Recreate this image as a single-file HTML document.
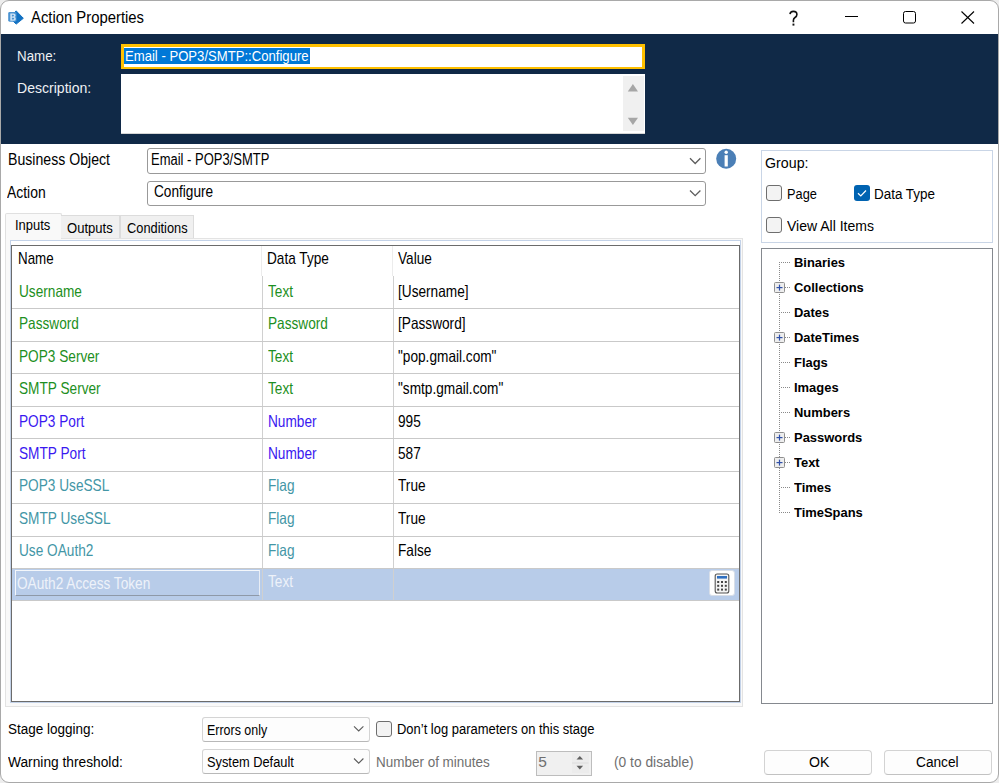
<!DOCTYPE html>
<html><head><meta charset="utf-8">
<style>*{margin:0;padding:0;box-sizing:border-box}
html,body{width:999px;height:783px;overflow:hidden;background:#ededed}
body{position:relative;font-family:"Liberation Sans",sans-serif;color:#000}
.a{position:absolute}
.t{position:absolute;white-space:pre;line-height:1;font-size:13px;transform-origin:0 0}
#win{position:absolute;left:0;top:0;width:999px;height:783px;background:#fff;border:1px solid #a9a9a9;border-radius:9px}
.g{color:#1d8f22}
.b{color:#3a18f0}
.f{color:#4396a6}
.tree{font-weight:bold}
</style></head><body>
<div id="win"></div>
<svg class="a" style="left:0;top:0" width="999" height="34">
<path d="M16.2 10.9 L23.3 18.3 L16.2 24.1 L9.4 17.6 Z" fill="#1271c2" stroke="#1271c2" stroke-width="1" stroke-linejoin="round"/>
<rect x="8.2" y="12.1" width="8.3" height="9.6" rx="1.4" fill="#4a93d2"/>
<path d="M10.3 13.4 H13.6 Q15.6 13.4 15.6 15.3 Q15.6 16.8 14.4 17 Q15.8 17.3 15.8 18.9 Q15.8 20.8 13.7 20.8 H10.3 Z M11.9 14.8 V16.4 H13.1 Q14 16.4 14 15.6 Q14 14.8 13.1 14.8 Z M11.9 17.7 V19.4 H13.2 Q14.2 19.4 14.2 18.55 Q14.2 17.7 13.2 17.7 Z" fill="#cfe3f5" fill-rule="evenodd"/>
<path d="M790 14.2 Q790.3 11.4 793.3 11.4 Q796.9 11.4 796.9 14.5 Q796.9 16.3 795 17.5 Q793.4 18.5 793.4 20.3 V22.3" fill="none" stroke="#111" stroke-width="1.6"/>
<rect x="792.5" y="23.6" width="1.9" height="2" fill="#111"/>
<line x1="845" y1="16.5" x2="858" y2="16.5" stroke="#000" stroke-width="1"/>
<rect x="903.5" y="11.5" width="12" height="11.5" rx="2" fill="none" stroke="#000" stroke-width="1"/>
<line x1="961.5" y1="11.5" x2="974" y2="23.5" stroke="#000" stroke-width="1.1"/>
<line x1="974" y1="11.5" x2="961.5" y2="23.5" stroke="#000" stroke-width="1.1"/>
</svg>
<div class="t " style="left:31.2px;top:9.56px;font-size:16px;color:#000;transform:scaleX(0.9274);">Action Properties</div>
<div class="a" style="left:1px;top:34px;width:997px;height:109.5px;background:#102947"></div>
<div class="t " style="left:16.9px;top:49.14px;font-size:14.6px;color:#eef0f3;transform:scaleX(0.9143);">Name:</div>
<div class="t " style="left:16.9px;top:80.54px;font-size:14.6px;color:#eef0f3;transform:scaleX(0.9629);">Description:</div>
<div class="a" style="left:121px;top:44px;width:524px;height:25px;background:#fff;border:3px solid #ffc000;border-bottom-width:2.5px"></div>
<div class="a" style="left:124px;top:47.5px;width:186px;height:16.5px;background:#0078d7"></div>
<div class="t " style="left:125px;top:48.57px;font-size:14.8px;color:#fff;transform:scaleX(0.8860);">Email - POP3/SMTP::Configure</div>
<div class="a" style="left:120.5px;top:74px;width:524.5px;height:59.5px;background:#fff;border-bottom:1px solid #d6d6d6"></div>
<div class="a" style="left:623px;top:76px;width:21px;height:55px;background:#f0f0f0"></div>
<svg class="a" style="left:620px;top:80px" width="30" height="50">
<path d="M7.8 11.4 L12.9 4 L18 11.4 Z" fill="#a6a6a6"/>
<path d="M7.8 37.8 L18 37.8 L12.9 45.1 Z" fill="#a6a6a6"/>
</svg>
<div class="t " style="left:7.7px;top:151.33px;font-size:16.5px;color:#000;transform:scaleX(0.8555);">Business Object</div>
<div class="t " style="left:7.2px;top:183.53px;font-size:16.5px;color:#000;transform:scaleX(0.8439);">Action</div>
<div class="a" style="left:147px;top:148px;width:559px;height:25.5px;background:#fff;border:1.5px solid #999;border-radius:3px"></div>
<div class="t " style="left:151.3px;top:151.93px;font-size:15.8px;color:#000;transform:scaleX(0.8217);">Email - POP3/SMTP</div>
<div class="a" style="left:147px;top:180.5px;width:559px;height:25.5px;background:#fff;border:1.5px solid #999;border-radius:3px"></div>
<div class="t " style="left:153.5px;top:184.13px;font-size:15.8px;color:#000;transform:scaleX(0.8642);">Configure</div>
<svg class="a" style="left:680px;top:140px" width="70" height="75">
<polyline points="10,18.3 15.2,23.5 20.4,18.3" fill="none" stroke="#5c5c5c" stroke-width="1.3"/>
<polyline points="10,50.5 15.2,55.7 20.4,50.5" fill="none" stroke="#5c5c5c" stroke-width="1.3"/>
<circle cx="46.2" cy="18.7" r="10" fill="#4b7fb6"/>
<circle cx="46.2" cy="12.2" r="1.7" fill="#fff"/>
<rect x="44.6" y="15.2" width="3.2" height="11.3" fill="#fff"/>
</svg>
<div class="a" style="left:5px;top:238px;width:738px;height:469px;background:#f9f9f9;border:1px solid #e3e3e3"></div>
<div class="a" style="left:5px;top:212.5px;width:56.5px;height:26.5px;background:#f9f9f9;border:1px solid #e0e0e0;border-bottom:none;border-radius:2px 2px 0 0"></div>
<div class="a" style="left:61px;top:215px;width:58.5px;height:23px;background:#f0f0f0;border:1px solid #dcdcdc;border-bottom:none;border-left:none"></div>
<div class="a" style="left:119.5px;top:215px;width:74px;height:23px;background:#f0f0f0;border:1px solid #dcdcdc;border-bottom:none"></div>
<div class="t " style="left:14.7px;top:217.00px;font-size:15px;color:#000;transform:scaleX(0.8636);">Inputs</div>
<div class="t " style="left:66.5px;top:219.70px;font-size:15px;color:#000;transform:scaleX(0.8700);">Outputs</div>
<div class="t " style="left:127.4px;top:219.70px;font-size:15px;color:#000;transform:scaleX(0.8548);">Conditions</div>
<div class="a" style="left:10px;top:240px;width:731px;height:463px;background:#fff;border:1px solid #c3d2e8"></div>
<div class="a" style="left:11px;top:245px;width:729px;height:457px;background:#fff;border:1px solid #6b6b6b"></div>
<div class="t " style="left:17.8px;top:249.62px;font-size:16.4px;color:#000;transform:scaleX(0.8140);">Name</div>
<div class="t " style="left:267px;top:249.62px;font-size:16.4px;color:#000;transform:scaleX(0.8323);">Data Type</div>
<div class="t " style="left:397.5px;top:249.62px;font-size:16.4px;color:#000;transform:scaleX(0.8323);">Value</div>
<div class="a" style="left:261px;top:246px;width:1px;height:30px;background:#ececec"></div>
<div class="a" style="left:391.5px;top:246px;width:1px;height:30px;background:#ececec"></div>
<div class="a" style="left:12px;top:568px;width:727px;height:32px;background:#b8cce9"></div>
<div class="a" style="left:262px;top:276px;width:1px;height:324px;background:#d0d0d0"></div>
<div class="a" style="left:392.5px;top:276px;width:1px;height:324px;background:#d0d0d0"></div>
<div class="a" style="left:12px;top:308px;width:727px;height:1.2px;background:#c9c9c9"></div>
<div class="a" style="left:12px;top:341px;width:727px;height:1.2px;background:#c9c9c9"></div>
<div class="a" style="left:12px;top:373px;width:727px;height:1.2px;background:#c9c9c9"></div>
<div class="a" style="left:12px;top:406px;width:727px;height:1.2px;background:#c9c9c9"></div>
<div class="a" style="left:12px;top:438px;width:727px;height:1.2px;background:#c9c9c9"></div>
<div class="a" style="left:12px;top:471px;width:727px;height:1.2px;background:#c9c9c9"></div>
<div class="a" style="left:12px;top:503px;width:727px;height:1.2px;background:#c9c9c9"></div>
<div class="a" style="left:12px;top:535.5px;width:727px;height:1.2px;background:#c9c9c9"></div>
<div class="a" style="left:12px;top:568px;width:727px;height:1.2px;background:#c9c9c9"></div>
<div class="a" style="left:12px;top:600px;width:727px;height:1.2px;background:#c9c9c9"></div>
<div class="t g" style="left:19px;top:282.93px;font-size:16.5px;transform:scaleX(0.8273);">Username</div>
<div class="t g" style="left:268px;top:282.93px;font-size:16.5px;transform:scaleX(0.8273);">Text</div>
<div class="t " style="left:398px;top:282.93px;font-size:16.5px;color:#000;transform:scaleX(0.8273);">[Username]</div>
<div class="t g" style="left:19px;top:315.33px;font-size:16.5px;transform:scaleX(0.8273);">Password</div>
<div class="t g" style="left:268px;top:315.33px;font-size:16.5px;transform:scaleX(0.8273);">Password</div>
<div class="t " style="left:398px;top:315.33px;font-size:16.5px;color:#000;transform:scaleX(0.8273);">[Password]</div>
<div class="t g" style="left:19px;top:347.73px;font-size:16.5px;transform:scaleX(0.8273);">POP3 Server</div>
<div class="t g" style="left:268px;top:347.73px;font-size:16.5px;transform:scaleX(0.8273);">Text</div>
<div class="t " style="left:398px;top:347.73px;font-size:16.5px;color:#000;transform:scaleX(0.8273);">"pop.gmail.com"</div>
<div class="t g" style="left:19px;top:380.13px;font-size:16.5px;transform:scaleX(0.8273);">SMTP Server</div>
<div class="t g" style="left:268px;top:380.13px;font-size:16.5px;transform:scaleX(0.8273);">Text</div>
<div class="t " style="left:398px;top:380.13px;font-size:16.5px;color:#000;transform:scaleX(0.8273);">"smtp.gmail.com"</div>
<div class="t b" style="left:19px;top:412.53px;font-size:16.5px;transform:scaleX(0.8273);">POP3 Port</div>
<div class="t b" style="left:268px;top:412.53px;font-size:16.5px;transform:scaleX(0.8273);">Number</div>
<div class="t " style="left:398px;top:412.53px;font-size:16.5px;color:#000;transform:scaleX(0.8273);">995</div>
<div class="t b" style="left:19px;top:444.93px;font-size:16.5px;transform:scaleX(0.8273);">SMTP Port</div>
<div class="t b" style="left:268px;top:444.93px;font-size:16.5px;transform:scaleX(0.8273);">Number</div>
<div class="t " style="left:398px;top:444.93px;font-size:16.5px;color:#000;transform:scaleX(0.8273);">587</div>
<div class="t f" style="left:19px;top:477.33px;font-size:16.5px;transform:scaleX(0.8273);">POP3 UseSSL</div>
<div class="t f" style="left:268px;top:477.33px;font-size:16.5px;transform:scaleX(0.8273);">Flag</div>
<div class="t " style="left:398px;top:477.33px;font-size:16.5px;color:#000;transform:scaleX(0.8273);">True</div>
<div class="t f" style="left:19px;top:509.73px;font-size:16.5px;transform:scaleX(0.8273);">SMTP UseSSL</div>
<div class="t f" style="left:268px;top:509.73px;font-size:16.5px;transform:scaleX(0.8273);">Flag</div>
<div class="t " style="left:398px;top:509.73px;font-size:16.5px;color:#000;transform:scaleX(0.8273);">True</div>
<div class="t f" style="left:19px;top:542.13px;font-size:16.5px;transform:scaleX(0.8273);">Use OAuth2</div>
<div class="t f" style="left:268px;top:542.13px;font-size:16.5px;transform:scaleX(0.8273);">Flag</div>
<div class="t " style="left:398px;top:542.13px;font-size:16.5px;color:#000;transform:scaleX(0.8273);">False</div>
<div class="a" style="left:14.5px;top:569.5px;width:245px;height:26px;background:#b8cce9;border:1.5px solid #f4f7fb;border-bottom-color:#8e99a8;border-right-color:#e8edf5"></div>
<div class="t " style="left:16.5px;top:574.53px;font-size:16.5px;color:#eef2f9;transform:scaleX(0.8273);">OAuth2 Access Token</div>
<div class="t " style="left:268px;top:572.83px;font-size:16.5px;color:#eef2f9;transform:scaleX(0.8273);">Text</div>
<div class="a" style="left:709.3px;top:570px;width:25.3px;height:26px;background:#fff;border:1px solid #d8dee8;border-radius:3px"></div>
<svg class="a" style="left:714px;top:573px" width="17" height="21">
<rect x="1.2" y="1" width="13.6" height="19" rx="2" fill="#f4f4f4" stroke="#555" stroke-width="1.1"/>
<rect x="3" y="3" width="10" height="2.6" fill="#2f6fc0"/>
<g fill="#444">
<rect x="3.2" y="8" width="2" height="2"/><rect x="7" y="8" width="2" height="2"/><rect x="10.8" y="8" width="2" height="2"/>
<rect x="3.2" y="11.8" width="2" height="2"/><rect x="7" y="11.8" width="2" height="2"/><rect x="10.8" y="11.8" width="2" height="2"/>
<rect x="3.2" y="15.6" width="2" height="2"/><rect x="7" y="15.6" width="2" height="2"/><rect x="10.8" y="15.6" width="2" height="2"/>
</g></svg>
<div class="a" style="left:760.5px;top:149.5px;width:232.5px;height:93.5px;border:1px solid #c9d5e6"></div>
<div class="t " style="left:764.9px;top:155.65px;font-size:14px;color:#000;transform:scaleX(1.0161);">Group:</div>
<div class="a" style="left:766px;top:185px;width:16px;height:16px;background:#f3f3f3;border:1px solid #6e6e6e;border-radius:3px"></div>
<div class="t " style="left:786.9px;top:187.05px;font-size:14px;color:#000;transform:scaleX(0.9143);">Page</div>
<div class="a" style="left:853.5px;top:185px;width:16px;height:16px;background:#0063b1;border-radius:3px"></div>
<svg class="a" style="left:853.5px;top:185px" width="16" height="16"><polyline points="4,8.3 6.8,11 12,5.5" fill="none" stroke="#fff" stroke-width="1.2"/></svg>
<div class="t " style="left:874px;top:187.05px;font-size:14px;color:#000;transform:scaleX(0.9597);">Data Type</div>
<div class="a" style="left:766px;top:217.3px;width:16px;height:16px;background:#f3f3f3;border:1px solid #6e6e6e;border-radius:3px"></div>
<div class="t " style="left:787px;top:219.45px;font-size:14px;color:#000;transform:scaleX(1.0013);">View All Items</div>
<div class="a" style="left:760.5px;top:248px;width:232.5px;height:456px;background:#fff;border:1px solid #85898f"></div>
<svg class="a" style="left:760px;top:248px" width="40" height="280"><rect x="19" y="14" width="1" height="1" fill="#8a8a8a"/><rect x="19" y="16" width="1" height="1" fill="#8a8a8a"/><rect x="19" y="18" width="1" height="1" fill="#8a8a8a"/><rect x="19" y="20" width="1" height="1" fill="#8a8a8a"/><rect x="19" y="22" width="1" height="1" fill="#8a8a8a"/><rect x="19" y="24" width="1" height="1" fill="#8a8a8a"/><rect x="19" y="26" width="1" height="1" fill="#8a8a8a"/><rect x="19" y="28" width="1" height="1" fill="#8a8a8a"/><rect x="19" y="30" width="1" height="1" fill="#8a8a8a"/><rect x="19" y="32" width="1" height="1" fill="#8a8a8a"/><rect x="19" y="34" width="1" height="1" fill="#8a8a8a"/><rect x="19" y="36" width="1" height="1" fill="#8a8a8a"/><rect x="19" y="38" width="1" height="1" fill="#8a8a8a"/><rect x="19" y="40" width="1" height="1" fill="#8a8a8a"/><rect x="19" y="42" width="1" height="1" fill="#8a8a8a"/><rect x="19" y="44" width="1" height="1" fill="#8a8a8a"/><rect x="19" y="46" width="1" height="1" fill="#8a8a8a"/><rect x="19" y="48" width="1" height="1" fill="#8a8a8a"/><rect x="19" y="50" width="1" height="1" fill="#8a8a8a"/><rect x="19" y="52" width="1" height="1" fill="#8a8a8a"/><rect x="19" y="54" width="1" height="1" fill="#8a8a8a"/><rect x="19" y="56" width="1" height="1" fill="#8a8a8a"/><rect x="19" y="58" width="1" height="1" fill="#8a8a8a"/><rect x="19" y="60" width="1" height="1" fill="#8a8a8a"/><rect x="19" y="62" width="1" height="1" fill="#8a8a8a"/><rect x="19" y="64" width="1" height="1" fill="#8a8a8a"/><rect x="19" y="66" width="1" height="1" fill="#8a8a8a"/><rect x="19" y="68" width="1" height="1" fill="#8a8a8a"/><rect x="19" y="70" width="1" height="1" fill="#8a8a8a"/><rect x="19" y="72" width="1" height="1" fill="#8a8a8a"/><rect x="19" y="74" width="1" height="1" fill="#8a8a8a"/><rect x="19" y="76" width="1" height="1" fill="#8a8a8a"/><rect x="19" y="78" width="1" height="1" fill="#8a8a8a"/><rect x="19" y="80" width="1" height="1" fill="#8a8a8a"/><rect x="19" y="82" width="1" height="1" fill="#8a8a8a"/><rect x="19" y="84" width="1" height="1" fill="#8a8a8a"/><rect x="19" y="86" width="1" height="1" fill="#8a8a8a"/><rect x="19" y="88" width="1" height="1" fill="#8a8a8a"/><rect x="19" y="90" width="1" height="1" fill="#8a8a8a"/><rect x="19" y="92" width="1" height="1" fill="#8a8a8a"/><rect x="19" y="94" width="1" height="1" fill="#8a8a8a"/><rect x="19" y="96" width="1" height="1" fill="#8a8a8a"/><rect x="19" y="98" width="1" height="1" fill="#8a8a8a"/><rect x="19" y="100" width="1" height="1" fill="#8a8a8a"/><rect x="19" y="102" width="1" height="1" fill="#8a8a8a"/><rect x="19" y="104" width="1" height="1" fill="#8a8a8a"/><rect x="19" y="106" width="1" height="1" fill="#8a8a8a"/><rect x="19" y="108" width="1" height="1" fill="#8a8a8a"/><rect x="19" y="110" width="1" height="1" fill="#8a8a8a"/><rect x="19" y="112" width="1" height="1" fill="#8a8a8a"/><rect x="19" y="114" width="1" height="1" fill="#8a8a8a"/><rect x="19" y="116" width="1" height="1" fill="#8a8a8a"/><rect x="19" y="118" width="1" height="1" fill="#8a8a8a"/><rect x="19" y="120" width="1" height="1" fill="#8a8a8a"/><rect x="19" y="122" width="1" height="1" fill="#8a8a8a"/><rect x="19" y="124" width="1" height="1" fill="#8a8a8a"/><rect x="19" y="126" width="1" height="1" fill="#8a8a8a"/><rect x="19" y="128" width="1" height="1" fill="#8a8a8a"/><rect x="19" y="130" width="1" height="1" fill="#8a8a8a"/><rect x="19" y="132" width="1" height="1" fill="#8a8a8a"/><rect x="19" y="134" width="1" height="1" fill="#8a8a8a"/><rect x="19" y="136" width="1" height="1" fill="#8a8a8a"/><rect x="19" y="138" width="1" height="1" fill="#8a8a8a"/><rect x="19" y="140" width="1" height="1" fill="#8a8a8a"/><rect x="19" y="142" width="1" height="1" fill="#8a8a8a"/><rect x="19" y="144" width="1" height="1" fill="#8a8a8a"/><rect x="19" y="146" width="1" height="1" fill="#8a8a8a"/><rect x="19" y="148" width="1" height="1" fill="#8a8a8a"/><rect x="19" y="150" width="1" height="1" fill="#8a8a8a"/><rect x="19" y="152" width="1" height="1" fill="#8a8a8a"/><rect x="19" y="154" width="1" height="1" fill="#8a8a8a"/><rect x="19" y="156" width="1" height="1" fill="#8a8a8a"/><rect x="19" y="158" width="1" height="1" fill="#8a8a8a"/><rect x="19" y="160" width="1" height="1" fill="#8a8a8a"/><rect x="19" y="162" width="1" height="1" fill="#8a8a8a"/><rect x="19" y="164" width="1" height="1" fill="#8a8a8a"/><rect x="19" y="166" width="1" height="1" fill="#8a8a8a"/><rect x="19" y="168" width="1" height="1" fill="#8a8a8a"/><rect x="19" y="170" width="1" height="1" fill="#8a8a8a"/><rect x="19" y="172" width="1" height="1" fill="#8a8a8a"/><rect x="19" y="174" width="1" height="1" fill="#8a8a8a"/><rect x="19" y="176" width="1" height="1" fill="#8a8a8a"/><rect x="19" y="178" width="1" height="1" fill="#8a8a8a"/><rect x="19" y="180" width="1" height="1" fill="#8a8a8a"/><rect x="19" y="182" width="1" height="1" fill="#8a8a8a"/><rect x="19" y="184" width="1" height="1" fill="#8a8a8a"/><rect x="19" y="186" width="1" height="1" fill="#8a8a8a"/><rect x="19" y="188" width="1" height="1" fill="#8a8a8a"/><rect x="19" y="190" width="1" height="1" fill="#8a8a8a"/><rect x="19" y="192" width="1" height="1" fill="#8a8a8a"/><rect x="19" y="194" width="1" height="1" fill="#8a8a8a"/><rect x="19" y="196" width="1" height="1" fill="#8a8a8a"/><rect x="19" y="198" width="1" height="1" fill="#8a8a8a"/><rect x="19" y="200" width="1" height="1" fill="#8a8a8a"/><rect x="19" y="202" width="1" height="1" fill="#8a8a8a"/><rect x="19" y="204" width="1" height="1" fill="#8a8a8a"/><rect x="19" y="206" width="1" height="1" fill="#8a8a8a"/><rect x="19" y="208" width="1" height="1" fill="#8a8a8a"/><rect x="19" y="210" width="1" height="1" fill="#8a8a8a"/><rect x="19" y="212" width="1" height="1" fill="#8a8a8a"/><rect x="19" y="214" width="1" height="1" fill="#8a8a8a"/><rect x="19" y="216" width="1" height="1" fill="#8a8a8a"/><rect x="19" y="218" width="1" height="1" fill="#8a8a8a"/><rect x="19" y="220" width="1" height="1" fill="#8a8a8a"/><rect x="19" y="222" width="1" height="1" fill="#8a8a8a"/><rect x="19" y="224" width="1" height="1" fill="#8a8a8a"/><rect x="19" y="226" width="1" height="1" fill="#8a8a8a"/><rect x="19" y="228" width="1" height="1" fill="#8a8a8a"/><rect x="19" y="230" width="1" height="1" fill="#8a8a8a"/><rect x="19" y="232" width="1" height="1" fill="#8a8a8a"/><rect x="19" y="234" width="1" height="1" fill="#8a8a8a"/><rect x="19" y="236" width="1" height="1" fill="#8a8a8a"/><rect x="19" y="238" width="1" height="1" fill="#8a8a8a"/><rect x="19" y="240" width="1" height="1" fill="#8a8a8a"/><rect x="19" y="242" width="1" height="1" fill="#8a8a8a"/><rect x="19" y="244" width="1" height="1" fill="#8a8a8a"/><rect x="19" y="246" width="1" height="1" fill="#8a8a8a"/><rect x="19" y="248" width="1" height="1" fill="#8a8a8a"/><rect x="19" y="250" width="1" height="1" fill="#8a8a8a"/><rect x="19" y="252" width="1" height="1" fill="#8a8a8a"/><rect x="19" y="254" width="1" height="1" fill="#8a8a8a"/><rect x="19" y="256" width="1" height="1" fill="#8a8a8a"/><rect x="19" y="258" width="1" height="1" fill="#8a8a8a"/><rect x="19" y="260" width="1" height="1" fill="#8a8a8a"/><rect x="19" y="262" width="1" height="1" fill="#8a8a8a"/><rect x="19" y="264" width="1" height="1" fill="#8a8a8a"/><rect x="21" y="14" width="1" height="1" fill="#8a8a8a"/><rect x="23" y="14" width="1" height="1" fill="#8a8a8a"/><rect x="25" y="14" width="1" height="1" fill="#8a8a8a"/><rect x="27" y="14" width="1" height="1" fill="#8a8a8a"/><rect x="29" y="14" width="1" height="1" fill="#8a8a8a"/><rect x="21" y="39" width="1" height="1" fill="#8a8a8a"/><rect x="23" y="39" width="1" height="1" fill="#8a8a8a"/><rect x="25" y="39" width="1" height="1" fill="#8a8a8a"/><rect x="27" y="39" width="1" height="1" fill="#8a8a8a"/><rect x="29" y="39" width="1" height="1" fill="#8a8a8a"/><rect x="14.5" y="34.5" width="10" height="10" rx="1" fill="#eeeeee" stroke="#8f8f8f" stroke-width="1"/><rect x="16.5" y="39" width="6" height="1.2" fill="#2f4fa8"/><rect x="18.9" y="36.6" width="1.2" height="6" fill="#2f4fa8"/><rect x="21" y="64" width="1" height="1" fill="#8a8a8a"/><rect x="23" y="64" width="1" height="1" fill="#8a8a8a"/><rect x="25" y="64" width="1" height="1" fill="#8a8a8a"/><rect x="27" y="64" width="1" height="1" fill="#8a8a8a"/><rect x="29" y="64" width="1" height="1" fill="#8a8a8a"/><rect x="21" y="89" width="1" height="1" fill="#8a8a8a"/><rect x="23" y="89" width="1" height="1" fill="#8a8a8a"/><rect x="25" y="89" width="1" height="1" fill="#8a8a8a"/><rect x="27" y="89" width="1" height="1" fill="#8a8a8a"/><rect x="29" y="89" width="1" height="1" fill="#8a8a8a"/><rect x="14.5" y="84.5" width="10" height="10" rx="1" fill="#eeeeee" stroke="#8f8f8f" stroke-width="1"/><rect x="16.5" y="89" width="6" height="1.2" fill="#2f4fa8"/><rect x="18.9" y="86.6" width="1.2" height="6" fill="#2f4fa8"/><rect x="21" y="114" width="1" height="1" fill="#8a8a8a"/><rect x="23" y="114" width="1" height="1" fill="#8a8a8a"/><rect x="25" y="114" width="1" height="1" fill="#8a8a8a"/><rect x="27" y="114" width="1" height="1" fill="#8a8a8a"/><rect x="29" y="114" width="1" height="1" fill="#8a8a8a"/><rect x="21" y="139" width="1" height="1" fill="#8a8a8a"/><rect x="23" y="139" width="1" height="1" fill="#8a8a8a"/><rect x="25" y="139" width="1" height="1" fill="#8a8a8a"/><rect x="27" y="139" width="1" height="1" fill="#8a8a8a"/><rect x="29" y="139" width="1" height="1" fill="#8a8a8a"/><rect x="21" y="164" width="1" height="1" fill="#8a8a8a"/><rect x="23" y="164" width="1" height="1" fill="#8a8a8a"/><rect x="25" y="164" width="1" height="1" fill="#8a8a8a"/><rect x="27" y="164" width="1" height="1" fill="#8a8a8a"/><rect x="29" y="164" width="1" height="1" fill="#8a8a8a"/><rect x="21" y="189" width="1" height="1" fill="#8a8a8a"/><rect x="23" y="189" width="1" height="1" fill="#8a8a8a"/><rect x="25" y="189" width="1" height="1" fill="#8a8a8a"/><rect x="27" y="189" width="1" height="1" fill="#8a8a8a"/><rect x="29" y="189" width="1" height="1" fill="#8a8a8a"/><rect x="14.5" y="184.5" width="10" height="10" rx="1" fill="#eeeeee" stroke="#8f8f8f" stroke-width="1"/><rect x="16.5" y="189" width="6" height="1.2" fill="#2f4fa8"/><rect x="18.9" y="186.6" width="1.2" height="6" fill="#2f4fa8"/><rect x="21" y="214" width="1" height="1" fill="#8a8a8a"/><rect x="23" y="214" width="1" height="1" fill="#8a8a8a"/><rect x="25" y="214" width="1" height="1" fill="#8a8a8a"/><rect x="27" y="214" width="1" height="1" fill="#8a8a8a"/><rect x="29" y="214" width="1" height="1" fill="#8a8a8a"/><rect x="14.5" y="209.5" width="10" height="10" rx="1" fill="#eeeeee" stroke="#8f8f8f" stroke-width="1"/><rect x="16.5" y="214" width="6" height="1.2" fill="#2f4fa8"/><rect x="18.9" y="211.6" width="1.2" height="6" fill="#2f4fa8"/><rect x="21" y="239" width="1" height="1" fill="#8a8a8a"/><rect x="23" y="239" width="1" height="1" fill="#8a8a8a"/><rect x="25" y="239" width="1" height="1" fill="#8a8a8a"/><rect x="27" y="239" width="1" height="1" fill="#8a8a8a"/><rect x="29" y="239" width="1" height="1" fill="#8a8a8a"/><rect x="21" y="264" width="1" height="1" fill="#8a8a8a"/><rect x="23" y="264" width="1" height="1" fill="#8a8a8a"/><rect x="25" y="264" width="1" height="1" fill="#8a8a8a"/><rect x="27" y="264" width="1" height="1" fill="#8a8a8a"/><rect x="29" y="264" width="1" height="1" fill="#8a8a8a"/></svg>
<div class="t tree" style="left:793.7px;top:256.10px;font-size:13.7px;color:#000;transform:scaleX(0.9453);">Binaries</div>
<div class="t tree" style="left:793.7px;top:281.10px;font-size:13.7px;color:#000;transform:scaleX(0.9453);">Collections</div>
<div class="t tree" style="left:793.7px;top:306.10px;font-size:13.7px;color:#000;transform:scaleX(0.9453);">Dates</div>
<div class="t tree" style="left:793.7px;top:331.10px;font-size:13.7px;color:#000;transform:scaleX(0.9453);">DateTimes</div>
<div class="t tree" style="left:793.7px;top:356.10px;font-size:13.7px;color:#000;transform:scaleX(0.9453);">Flags</div>
<div class="t tree" style="left:793.7px;top:381.10px;font-size:13.7px;color:#000;transform:scaleX(0.9453);">Images</div>
<div class="t tree" style="left:793.7px;top:406.10px;font-size:13.7px;color:#000;transform:scaleX(0.9453);">Numbers</div>
<div class="t tree" style="left:793.7px;top:431.10px;font-size:13.7px;color:#000;transform:scaleX(0.9453);">Passwords</div>
<div class="t tree" style="left:793.7px;top:456.10px;font-size:13.7px;color:#000;transform:scaleX(0.9453);">Text</div>
<div class="t tree" style="left:793.7px;top:481.10px;font-size:13.7px;color:#000;transform:scaleX(0.9453);">Times</div>
<div class="t tree" style="left:793.7px;top:506.10px;font-size:13.7px;color:#000;transform:scaleX(0.9453);">TimeSpans</div>
<div class="t " style="left:7.55px;top:720.88px;font-size:15.5px;color:#000;transform:scaleX(0.8697);">Stage logging:</div>
<div class="t " style="left:7.55px;top:753.68px;font-size:15.5px;color:#000;transform:scaleX(0.8870);">Warning threshold:</div>
<div class="a" style="left:202px;top:716.5px;width:167.5px;height:25px;background:#fdfdfd;border:1px solid #d4d4d4;border-bottom-color:#b8b8b8;border-radius:3px"></div>
<div class="t " style="left:207.2px;top:721.58px;font-size:15.5px;color:#000;transform:scaleX(0.8033);">Errors only</div>
<div class="a" style="left:202px;top:748.7px;width:167.5px;height:25px;background:#fdfdfd;border:1px solid #d4d4d4;border-bottom-color:#b8b8b8;border-radius:3px"></div>
<div class="t " style="left:207.2px;top:753.78px;font-size:15.5px;color:#000;transform:scaleX(0.8258);">System Default</div>
<svg class="a" style="left:350px;top:720px" width="20" height="60">
<polyline points="4,6.3 8.7,11 13.4,6.3" fill="none" stroke="#5c5c5c" stroke-width="1.1"/>
<polyline points="4,38.5 8.7,43.2 13.4,38.5" fill="none" stroke="#5c5c5c" stroke-width="1.1"/>
</svg>
<div class="a" style="left:376.2px;top:721.2px;width:15.5px;height:15.5px;background:#f3f3f3;border:1px solid #6e6e6e;border-radius:3px"></div>
<div class="t " style="left:396.7px;top:721.33px;font-size:15.2px;color:#000;transform:scaleX(0.8538);">Don’t log parameters on this stage</div>
<div class="t " style="left:375.9px;top:753.68px;font-size:15.5px;color:#6f6f6f;transform:scaleX(0.8690);">Number of minutes</div>
<div class="a" style="left:535.7px;top:750.8px;width:56px;height:25px;background:#f0f0f0;border:1.5px solid #bdbdbd"></div>
<div class="t " style="left:538.2px;top:753.98px;font-size:15.5px;color:#6f6f6f;">5</div>
<div class="a" style="left:572px;top:752.5px;width:16.5px;height:10px;background:#ececec"></div>
<div class="a" style="left:572px;top:762.8px;width:16.5px;height:10px;background:#ececec"></div>
<svg class="a" style="left:570px;top:750px" width="20" height="26">
<path d="M6.5 9.6 L9.8 6 L13.1 9.6 Z" fill="#606060"/>
<path d="M6.5 15.8 L13.1 15.8 L9.8 19.5 Z" fill="#606060"/>
<rect x="2" y="12.6" width="16.5" height="0.8" fill="#d9d9d9"/>
</svg>
<div class="t " style="left:614.3px;top:753.68px;font-size:15.5px;color:#6f6f6f;transform:scaleX(0.8894);">(0 to disable)</div>
<div class="a" style="left:764.3px;top:750px;width:108.2px;height:25.2px;background:#fdfdfd;border:1px solid #d3d3d3;border-bottom-color:#c2c2c2;border-radius:4px"></div>
<div class="t " style="left:809px;top:753.98px;font-size:15.5px;color:#000;transform:scaleX(0.9105);">OK</div>
<div class="a" style="left:883.7px;top:750px;width:108.8px;height:25.2px;background:#fdfdfd;border:1px solid #d3d3d3;border-bottom-color:#c2c2c2;border-radius:4px"></div>
<div class="t " style="left:916px;top:753.98px;font-size:15.5px;color:#000;transform:scaleX(0.8829);">Cancel</div>
</body></html>
